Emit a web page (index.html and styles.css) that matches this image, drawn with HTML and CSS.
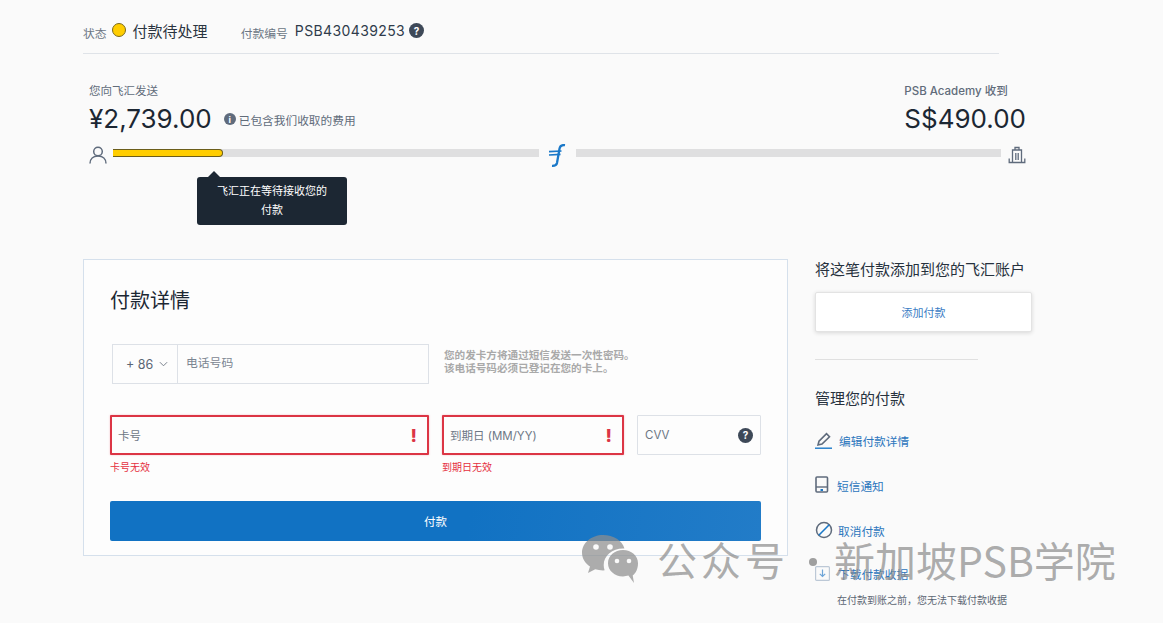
FILE: index.html
```html
<!DOCTYPE html>
<html lang="zh-CN">
<head>
<meta charset="utf-8">
<title>付款详情</title>
<link rel="stylesheet" href="styles.css">
</head>
<body>
<div class="page">
  <header class="status-bar">
    <span class="muted-label">状态</span>
    <span class="status-dot"></span>
    <span class="status-text">付款待处理</span>
    <span class="muted-label ref-label">付款编号</span>
    <span class="ref-value">PSB430439253</span>
    <span class="help-dot">?</span>
  </header>

  <section class="transfer">
    <div class="amounts">
      <div>
        <div class="amount-label">您向飞汇发送</div>
        <div class="amount-line">
          <span class="amount">¥2,739.00</span>
          <span class="info-dot">i</span>
          <span class="fee-note">已包含我们收取的费用</span>
        </div>
      </div>
      <div class="amount-right">
        <div class="amount-label">PSB Academy 收到</div>
        <div class="amount">S$490.00</div>
      </div>
    </div>
    <div class="progress">
      <svg class="icon-person" viewBox="0 0 18 18" width="18" height="18"><circle cx="9" cy="5.500" r="4.300" fill="none" stroke="#5f6b7c" stroke-width="1.500"/><path d="M1 17.500c0-4.600 3.200-7.600 8-7.600s8 3 8 7.600" fill="none" stroke="#5f6b7c" stroke-width="1.500"/></svg>
      <div class="track first"><div class="fill"></div></div>
      <svg class="icon-flywire" viewBox="0 0 18 24" width="18" height="24"><path d="M17 1.200c-3.500-.5-5 .8-5.500 3.500L9 19c-.5 2.200-1.500 3-5 2.800" fill="none" stroke="#1a78c8" stroke-width="2.300"/><path d="M1 7.600l12.500-.6M1 11l11.500-.6" fill="none" stroke="#1a78c8" stroke-width="1.700"/></svg>
      <div class="track second"></div>
      <svg class="icon-bank" viewBox="0 0 18 18" width="18" height="18"><path d="M4.500 16.500V4h9v12.500M7 4V1.500h4V4M7.800 7v7M10.200 7v7M1.200 12.500v4h15.600v-4" fill="none" stroke="#5f6b7c" stroke-width="1.300"/></svg>
      <div class="tooltip">飞汇正在等待接收您的<br>付款</div>
    </div>
  </section>

  <main class="content">
    <section class="card">
      <h1 class="card-title">付款详情</h1>
      <div class="phone-row">
        <div class="phone-field">
          <div class="prefix">+ 86
            <svg class="chevron" viewBox="0 0 10 6" width="9" height="6"><path d="M1 1l4 4 4-4" fill="none" stroke="#6b7480" stroke-width="1"/></svg>
          </div>
          <div class="phone-placeholder">电话号码</div>
        </div>
        <p class="phone-help">您的发卡方将通过短信发送一次性密码。<br>该电话号码必须已登记在您的卡上。</p>
      </div>
      <div class="card-row">
        <div class="col-number">
          <div class="field error"><span>卡号</span><b class="bang">!</b></div>
          <div class="error-text">卡号无效</div>
        </div>
        <div class="col-expiry">
          <div class="field error"><span>到期日 (MM/YY)</span><b class="bang">!</b></div>
          <div class="error-text">到期日无效</div>
        </div>
        <div class="col-cvv">
          <div class="field"><span>CVV</span><span class="help-dot">?</span></div>
        </div>
      </div>
      <button class="pay-button">付款</button>
    </section>

    <aside class="sidebar">
      <h2 class="side-title first-title">将这笔付款添加到您的飞汇账户</h2>
      <button class="add-button">添加付款</button>
      <hr class="side-rule">
      <h2 class="side-title manage">管理您的付款</h2>
      <a class="action edit">
        <svg viewBox="0 0 18 18" width="18" height="18"><path d="M3 14l1-3.800L11.500 2.700l3 3L7 13z" fill="none" stroke="#5f6b7c" stroke-width="1.600"/><path d="M0 17.200h17" stroke="#1a78c8" stroke-width="1.400"/></svg>
        <span>编辑付款详情</span>
      </a>
      <a class="action sms">
        <svg viewBox="0 0 14 18" width="14" height="18"><rect x="1" y="1" width="11.500" height="15" rx="1" fill="none" stroke="#5f6b7c" stroke-width="1.600"/><path d="M1 11h11.500" stroke="#5f6b7c" stroke-width="1.400"/><rect x="5.500" y="13" width="2.500" height="2" fill="#1a78c8"/></svg>
        <span>短信通知</span>
      </a>
      <a class="action cancel">
        <svg viewBox="0 0 18 18" width="18" height="18"><circle cx="9" cy="9" r="7.500" fill="none" stroke="#5f6b7c" stroke-width="1.500"/><path d="M3.800 14.200L14.200 3.800" stroke="#1a78c8" stroke-width="1.600"/></svg>
        <span>取消付款</span>
      </a>
      <a class="action download">
        <svg viewBox="0 0 15 15" width="15" height="15"><rect x=".6" y=".6" width="13.800" height="13.800" rx="1" fill="none" stroke="#bcc8d6" stroke-width="1.200"/><path d="M7.500 3.500v7M4.800 7.800l2.700 2.700 2.700-2.700" fill="none" stroke="#6ea5d8" stroke-width="1.200"/></svg>
        <span>下载付款收据</span>
      </a>
      <p class="download-note">在付款到账之前，您无法下载付款收据</p>
    </aside>
  </main>

  <div class="watermark">
    <svg class="wm-icon" viewBox="0 0 56 48" width="56" height="48">
      <path d="M21 0C9.500 0 0 7.900 0 17.800c0 5.700 3.100 10.500 8 13.800L6 38l7.200-3.700c2.400.7 5 1.100 7.800 1.100l1.600-.1c-.6-1.800-.9-3.500-.9-5.400 0-9.300 8.600-16.500 19.300-16.500l1.400.1C40.300 5.400 31.500 0 21 0z" fill="#8e8e8e" fill-opacity=".72"/>
      <path d="M41 15c-8.300 0-15 5.800-15 13.200S32.700 41.400 41 41.400c1.900 0 3.700-.3 5.400-.8L52 48l-1.300-7.500C54 38 56 33.600 56 28.200 56 20.800 49.300 15 41 15z" fill="#8e8e8e" fill-opacity=".72"/>
      <circle cx="14" cy="12" r="2.800" fill="#fafafa"/><circle cx="28" cy="12" r="2.800" fill="#fafafa"/>
      <circle cx="35" cy="26" r="2.300" fill="#fafafa"/><circle cx="47" cy="26" r="2.300" fill="#fafafa"/>
    </svg>
    <span class="wm-name">公众号</span>
    <span class="wm-dot"></span>
    <span class="wm-school">新加坡PSB学院</span>
  </div>
</div>
</body>
</html>
```
FILE: styles.css
```css
* { box-sizing: border-box; }
html, body { margin: 0; padding: 0; }
body {
  background: #fafafa;
  color: #1c2733;
  font-family: Inter, "Noto Sans CJK SC", "Noto Sans", sans-serif;
}
.page { position: relative; width: 1163px; height: 623px; overflow: hidden; }

.status-bar {
  display: flex;
  align-items: center;
  width: 916px;
  height: 54px;
  margin-left: 83px;
  padding-top: 8px;
  border-bottom: 1px solid #dfe3e8;
}
.muted-label { font-size: 11.800px; color: #6b7684; margin-top: 3px; }
.status-dot {
  width: 14px; height: 14px; margin: -2px 7px 0 5px;
  border-radius: 50%; background: #ffcd00; border: 1px solid #7a6a1c;
}
.status-text { font-size: 15px; color: #2a3440; }
.ref-label { margin-left: 33px; }
.ref-value { margin-left: 7px; font-size: 14px; letter-spacing: .38px; color: #2f3b4b; }
.help-dot {
  display: inline-flex; align-items: center; justify-content: center;
  width: 15px; height: 15px; border-radius: 50%;
  background: #3e4958; color: #fff; font-size: 10px; font-weight: 700;
}
.status-bar .help-dot { margin-left: 4px; }

.transfer { margin: 29px 0 0 89px; width: 937px; }
.amounts { display: flex; justify-content: space-between; }
.amount-label { font-size: 11.500px; line-height: 17px; color: #616c7a; }
.amount-right { text-align: right; }
.amount-right .amount-label { font-weight: 500; text-align: left; }
.amount-line { display: flex; align-items: center; }
.amount { font-size: 26px; line-height: 38px; color: #1c2733; }
.info-dot {
  display: inline-flex; align-items: center; justify-content: center;
  width: 12px; height: 12px; margin-left: 12px; border-radius: 50%;
  background: #5f6b7c; color: #fff; font-size: 9px; font-weight: 700;
}
.fee-note { margin-left: 3px; font-size: 11.700px; color: #616c7a; }

.progress { position: relative; display: flex; align-items: flex-start; height: 27px; margin-top: 7px; }
.icon-person { flex: none; margin-top: 1px; }
.track { height: 8px; background: #dfdfe0; margin-top: 4px; }
.track.first { width: 426px; margin-left: 6px; }
.track.second { width: 425px; }
.fill {
  width: 110px; height: 8px; background: #ffcd00;
  border: 1px solid #6b5d1a; border-left: 0; border-radius: 0 4px 4px 0;
}
.icon-flywire { flex: none; margin: -1px 10px 0 9px; }
.icon-bank { flex: none; margin: 1px 0 0 7px; }
.tooltip {
  position: absolute; left: 108px; top: 32px;
  width: 150px; height: 48px; padding-top: 5px;
  background: #1c2733; border-radius: 3px;
  color: #fff; font-size: 11px; line-height: 19px; text-align: center;
}
.tooltip::before {
  content: ""; position: absolute; left: 11px; top: -6px;
  width: 0; height: 0;
  border-left: 6px solid transparent; border-right: 6px solid transparent;
  border-bottom: 6px solid #1c2733;
}

.content { display: flex; align-items: flex-start; margin: 87px 0 0 83px; }
.card {
  flex: none; width: 705px; height: 297px; padding: 27px 26px 0 26px;
  background: #fdfdfd; border: 1px solid #d5e0ec;
}
.card-title { margin: 0; font-size: 20px; line-height: 28px; font-weight: 400; color: #1c2733; }
.phone-row { display: flex; align-items: center; margin: 29px 0 0 2px; }
.phone-field {
  display: flex; width: 317px; height: 40px; flex: none;
  border: 1px solid #dde1e7; background: #fdfdfd;
}
.prefix {
  display: flex; align-items: center; gap: 6px;
  width: 65px; padding-left: 13px;
  border-right: 1px solid #dde1e7; font-size: 12.500px; color: #5b6675;
}
.phone-placeholder { padding: 8px 0 0 8px; font-size: 11.800px; color: #7c8692; }
.phone-help { margin: -4px 0 0 15px; font-size: 10.600px; line-height: 13px; font-weight: 700; color: #a9a9a9; }

.card-row { display: flex; margin-top: 31px; height: 86px; }
.col-number { width: 319px; margin-right: 13px; }
.col-expiry { width: 182px; margin-right: 13px; }
.col-cvv { width: 124px; }
.field {
  display: flex; align-items: center; justify-content: space-between;
  height: 40px; padding: 0 7px;
  border: 1px solid #dde1e7; border-radius: 1px; background: #fdfdfd;
  font-size: 11.500px; color: #6d7785;
}
.field.error { border: 2px solid #dc3545; box-shadow: 0 0 2px rgba(220,53,69,.35); padding: 0 6px; }
.bang { color: #dc3545; font-size: 18px; font-weight: 800; margin-right: 4px; }
.error-text { margin-top: 5px; font-size: 10px; line-height: 14px; color: #e5303f; }
.pay-button {
  display: block; width: 651px; height: 40px; padding: 0; border: 0; border-radius: 2px;
  background: linear-gradient(100deg, #1172c3 55%, #227cc8);
  color: #fff; font: inherit; font-size: 11.500px;
}

.sidebar { flex: none; width: 217px; margin-left: 27px; }
.side-title { margin: 0; font-size: 15px; line-height: 20px; font-weight: 400; color: #26313d; white-space: nowrap; }
.first-title { padding-top: 1px; line-height: 20px; }
.add-button {
  display: block; width: 217px; height: 40px; margin-top: 12px; padding: 0;
  border: 1px solid #e3e3e3; border-radius: 2px; background: #fff;
  box-shadow: 0 1px 4px rgba(0,0,0,.14);
  color: #3a7cc4; font: inherit; font-size: 11px;
}
.side-rule { width: 163px; height: 1px; margin: 27px 0 0; border: 0; background: #e0e0e0; }
.manage { margin-top: 29px; }
.action { display: flex; align-items: center; font-size: 11.700px; color: #2c76bd; height: 20px; }
.action svg { flex: none; }
.edit { margin-top: 21px; }
.edit span { margin-left: 6px; }
.sms { margin-top: 25px; }
.sms span { margin-left: 8px; }
.cancel { margin-top: 25px; }
.cancel span { margin-left: 5px; }
.download { margin-top: 23px; }
.download span { margin-left: 8px; }
.download-note { margin: 10px 0 0 22px; font-size: 10px; line-height: 14px; white-space: nowrap; color: #5c6673; }

.watermark {
  position: absolute; left: 582px; top: 535px; height: 48px;
  display: flex; align-items: center;
  font-family: "Noto Sans CJK SC", sans-serif;
  color: rgba(142,142,142,.72);
}
.wm-icon { flex: none; }
.wm-name { margin-left: 19px; font-size: 40px; line-height: 48px; letter-spacing: 4px; }
.wm-dot { width: 8px; height: 8px; margin: 6px 0 0 20px; border-radius: 50%; background: rgba(142,142,142,.85); }
.wm-school { margin-left: 17px; font-size: 41px; line-height: 48px; white-space: nowrap; }
```
